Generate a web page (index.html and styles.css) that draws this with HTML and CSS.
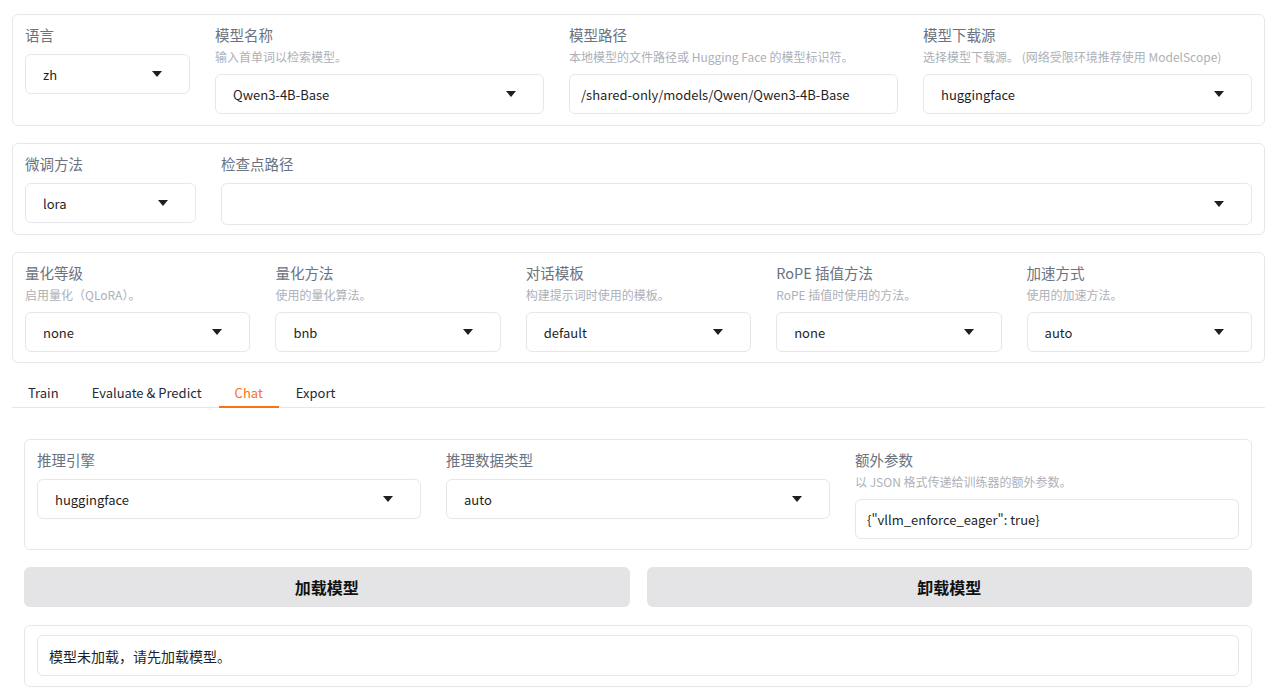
FILE: index.html
```html
<!DOCTYPE html>
<html lang="zh">
    <head>
        <meta charset="UTF-8">
        <title>LLaMA Board</title>
        <link rel="stylesheet" href="styles.css">
    </head>
    <body>
        <div class="page">
            <!-- 模型设置 -->
            <div class="block row-top">
                <div class="field">
                    <div class="label">语言</div>
                    <div class="select"><span>zh</span><i class="caret"></i></div>
                </div>
                <div class="field">
                    <div class="label">模型名称</div>
                    <div class="info">输入首单词以检索模型。</div>
                    <div class="select"><span>Qwen3-4B-Base</span><i class="caret"></i></div>
                </div>
                <div class="field">
                    <div class="label">模型路径</div>
                    <div class="info">本地模型的文件路径或 Hugging Face 的模型标识符。</div>
                    <div class="textbox latin">/shared-only/models/Qwen/Qwen3-4B-Base</div>
                </div>
                <div class="field">
                    <div class="label">模型下载源</div>
                    <div class="info">选择模型下载源。 (网络受限环境推荐使用 ModelScope)</div>
                    <div class="select"><span>huggingface</span><i class="caret"></i></div>
                </div>
            </div>

            <div class="block row-ckpt">
                <div class="field">
                    <div class="label">微调方法</div>
                    <div class="select"><span>lora</span><i class="caret"></i></div>
                </div>
                <div class="field">
                    <div class="label">检查点路径</div>
                    <div class="select tall"><span></span><i class="caret"></i></div>
                </div>
            </div>

            <div class="block row-five">
                <div class="field">
                    <div class="label">量化等级</div>
                    <div class="info">启用量化（QLoRA）。</div>
                    <div class="select"><span>none</span><i class="caret"></i></div>
                </div>
                <div class="field">
                    <div class="label">量化方法</div>
                    <div class="info">使用的量化算法。</div>
                    <div class="select"><span>bnb</span><i class="caret"></i></div>
                </div>
                <div class="field">
                    <div class="label">对话模板</div>
                    <div class="info">构建提示词时使用的模板。</div>
                    <div class="select"><span>default</span><i class="caret"></i></div>
                </div>
                <div class="field">
                    <div class="label">RoPE 插值方法</div>
                    <div class="info">RoPE 插值时使用的方法。</div>
                    <div class="select"><span>none</span><i class="caret"></i></div>
                </div>
                <div class="field">
                    <div class="label">加速方式</div>
                    <div class="info">使用的加速方法。</div>
                    <div class="select"><span>auto</span><i class="caret"></i></div>
                </div>
            </div>

            <!-- 标签页 -->
            <div class="tabs">
                <div class="tab">Train</div>
                <div class="tab">Evaluate &amp; Predict</div>
                <div class="tab selected">Chat</div>
                <div class="tab">Export</div>
            </div>

            <div class="panel">
                <div class="block row-three">
                    <div class="field">
                        <div class="label">推理引擎</div>
                        <div class="select"><span>huggingface</span><i class="caret"></i></div>
                    </div>
                    <div class="field">
                        <div class="label">推理数据类型</div>
                        <div class="select"><span>auto</span><i class="caret"></i></div>
                    </div>
                    <div class="field">
                        <div class="label">额外参数</div>
                        <div class="info">以 JSON 格式传递给训练器的额外参数。</div>
                        <div class="textbox latin">{"vllm_enforce_eager": true}</div>
                    </div>
                </div>

                <div class="buttons">
                    <button class="btn">加载模型</button>
                    <button class="btn">卸载模型</button>
                </div>

                <div class="block status">
                    <div class="textbox wide">模型未加载，请先加载模型。</div>
                </div>
            </div>
        </div>
    </body>
</html>
```

FILE: styles.css
```css
/* 整体 */
body{
    margin: 0;
    background-color: #fff;
    font-family: "Noto Sans CJK SC", "Noto Sans", sans-serif;
    color: #1f2937;
}

.page{
    padding: 14px 15px 0 12px;
}

/* 区块 */
.block{
    border: 1px solid #e5e7eb;
    border-radius: 6px;
    padding: 10px 12px 10px 12px;
    margin-bottom: 17px;
    background-color: #fff;
}

.row-top{
    display: grid;
    grid-template-columns: 165px 1fr 1fr 1fr;
    column-gap: 25px;
    align-items: start;
    padding-bottom: 11px;
}

.row-ckpt{
    display: grid;
    grid-template-columns: 171px 1fr;
    column-gap: 25px;
    align-items: start;
    padding-bottom: 9px;
}

.row-five{
    display: grid;
    grid-template-columns: repeat(5, 1fr);
    column-gap: 25px;
    align-items: start;
}

.row-three{
    display: grid;
    grid-template-columns: repeat(3, 1fr);
    column-gap: 25px;
    align-items: start;
    margin-bottom: 17px;
}

/* 字段 */
.label{
    font-size: 14.5px;
    line-height: 20px;
    height: 20px;
    color: #6b7280;
    white-space: nowrap;
}

.info{
    font-size: 12px;
    line-height: 16px;
    height: 16px;
    margin-top: 4px;
    color: #adb1b8;
    white-space: nowrap;
}

.select, .textbox{
    margin-top: 9px;
    height: 40px;
    box-sizing: border-box;
    border: 1px solid #e5e7eb;
    border-radius: 6px;
    background-color: #fff;
    font-size: 14px;
    color: #1f1f1f;
    display: flex;
    align-items: center;
}

/* 英文值用稍小的字号，贴近原图的窄字体宽度 */
.select span, .textbox.latin{
    font-size: 13px;
}

.select{
    padding: 0 27px 0 17px;
    justify-content: space-between;
}

.select.tall{
    height: 42px;
}

.textbox{
    padding: 0 11px;
}

.caret{
    width: 0;
    height: 0;
    border-left: 5px solid transparent;
    border-right: 5px solid transparent;
    border-top: 6px solid #1f1f1f;
}

/* 标签页 */
.tabs{
    display: flex;
    gap: 1px;
    border-bottom: 1px solid #e5e7eb;
}

.tab{
    padding: 0 16px;
    height: 28px;
    line-height: 26px;
    font-size: 13px;
    color: #1f2937;
    box-sizing: border-box;
    margin-bottom: -1px;
}

.tab.selected{
    color: #f97316;
    border-bottom: 2px solid #f97316;
}

.panel{
    padding: 31px 13px 0 12px;
}

/* 按钮 */
.buttons{
    display: grid;
    grid-template-columns: 1fr 1fr;
    column-gap: 17px;
    margin-bottom: 18px;
}

.btn{
    height: 40px;
    border: none;
    border-radius: 6px;
    background-color: #e4e4e7;
    font-family: "Noto Sans CJK SC", "Noto Sans", sans-serif;
    font-size: 16px;
    font-weight: bold;
    color: #111;
}

.status{
    padding: 9px 12px 10px 12px;
}

.textbox.wide{
    margin-top: 0;
    height: 41px;
}
```
